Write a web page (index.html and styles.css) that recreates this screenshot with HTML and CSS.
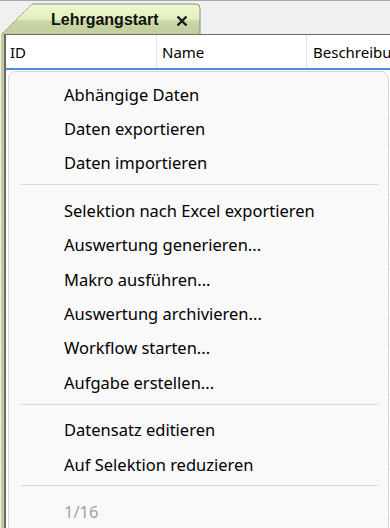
FILE: index.html
```html
<!DOCTYPE html>
<html lang="de">
<head>
    <meta charset="UTF-8">
    <meta name="viewport" content="width=device-width, initial-scale=1.0">
    <title>Lehrgangstart</title>
    <link rel="stylesheet" href="styles.css">
</head>
<body>

    <div class="tabbar">
        <div class="tab">
            <svg class="tab-shape" viewBox="0 0 200 31" width="200" height="31">
                <defs>
                    <linearGradient id="tabfill" x1="0" y1="0" x2="0" y2="1">
                        <stop offset="0" stop-color="#eef8d0"/>
                        <stop offset="0.5" stop-color="#e2efbd"/>
                        <stop offset="0.58" stop-color="#c9d6a6"/>
                        <stop offset="1" stop-color="#c1ce9c"/>
                    </linearGradient>
                </defs>
                <path d="M1 31 L31 1 L195 1 Q199 1 199 5 L199 31 Z" fill="url(#tabfill)"/>
                <path d="M31 1 L195 1 Q199 1 199 5 L199 31" fill="none" stroke="#8a8a8a" stroke-width="1"/>
                <path d="M1 31 L31 1" fill="none" stroke="#666" stroke-width="1" stroke-dasharray="1 1"/>
            </svg>
            <span class="tab-title">Lehrgangstart</span>
            <svg class="tab-close" viewBox="0 0 12 12" width="12" height="12">
                <path d="M1.5 1.5 L10.5 10.5 M10.5 1.5 L1.5 10.5" stroke="#1a1a1a" stroke-width="2.4" fill="none"/>
            </svg>
        </div>
    </div>

    <div class="panel">
        <div class="grid">
            <div class="grid-head">
                <div class="col col-id">ID</div>
                <div class="col col-name">Name</div>
                <div class="col col-desc">Beschreibung</div>
            </div>
            <div class="grid-body"></div>

            <!-- Kontextmenü über der Tabelle -->
            <div class="menu">
                <div class="item">Abhängige Daten</div>
                <div class="item">Daten exportieren</div>
                <div class="item">Daten importieren</div>
                <div class="sep"></div>
                <div class="item">Selektion nach Excel exportieren</div>
                <div class="item">Auswertung generieren...</div>
                <div class="item">Makro ausführen...</div>
                <div class="item">Auswertung archivieren...</div>
                <div class="item">Workflow starten...</div>
                <div class="item">Aufgabe erstellen...</div>
                <div class="sep"></div>
                <div class="item">Datensatz editieren</div>
                <div class="item">Auf Selektion reduzieren</div>
                <div class="sep"></div>
                <div class="item disabled">1/16</div>
            </div>
        </div>
    </div>

</body>
</html>
```

FILE: styles.css
```css
* {
    margin: 0;
    padding: 0;
    box-sizing: border-box;
}
html, body {
    height: 100%;
    overflow: hidden;
}
body {
    background-color: #f0f0f0;
    font-family: "Noto Sans", "Open Sans", sans-serif;
    color: #000;
    display: flex;
    flex-direction: column;
}
.tabbar {
    height: 34px;
    border-top: 1px solid #a8a8a8;
    padding-top: 2px;
    padding-left: 1px;
    display: flex;
    align-items: flex-end;
}
.tab {
    position: relative;
    width: 200px;
    height: 31px;
    display: flex;
    align-items: center;
    padding-left: 50px;
    padding-top: 3px;
}
.tab-shape {
    position: absolute;
    left: 0;
    top: 0;
}
.tab-title {
    position: relative;
    font-family: "Liberation Sans", Arial, sans-serif;
    font-weight: bold;
    font-size: 16px;
    color: #111;
}
.tab-close {
    position: relative;
    margin-left: 17px;
    margin-top: 1px;
}
.panel {
    flex: 1;
    margin-left: 1px;
    border-left: 3px solid #c1ce9c;
    display: flex;
    flex-direction: column;
}
.grid {
    flex: 1;
    position: relative;
    background: #fff;
    border-left: 2px solid #6a6a6a;
    border-top: 1px solid #6a6a6a;
    display: flex;
    flex-direction: column;
}
.grid-head {
    height: 35px;
    display: flex;
    border-bottom: 2px solid #4a90d8;
    font-size: 15px;
    white-space: nowrap;
    overflow: hidden;
}
.col {
    flex-shrink: 0;
    padding-left: 4px;
    padding-top: 1px;
    display: flex;
    align-items: center;
    border-right: 1px solid #e3e3e3;
}
.col-id {
    width: 151px;
}
.col-name {
    width: 150px;
    padding-left: 5px;
}
.col-desc {
    flex: 1;
    padding-left: 6px;
    border-right: none;
}
.grid-body {
    flex: 1;
    background: repeating-linear-gradient(to bottom, #fff 0, #fff 24px, #ececec 24px, #ececec 25px);
}
.menu {
    position: absolute;
    left: 2px;
    top: 36px;
    right: 1px;
    bottom: -10px;
    background: #f9f9f9;
    border: 1px solid #d6d6d6;
    border-top-left-radius: 8px;
    border-top-right-radius: 8px;
    padding-top: 5px;
    font-size: 16.5px;
}
.item {
    height: 34.4px;
    display: flex;
    align-items: center;
    padding-left: 55px;
    white-space: nowrap;
}
.item.disabled {
    color: #a3a3a3;
}
.sep {
    height: 1px;
    background: #d9d9d9;
    margin: 4px 10px 8px 12px;
}
```
